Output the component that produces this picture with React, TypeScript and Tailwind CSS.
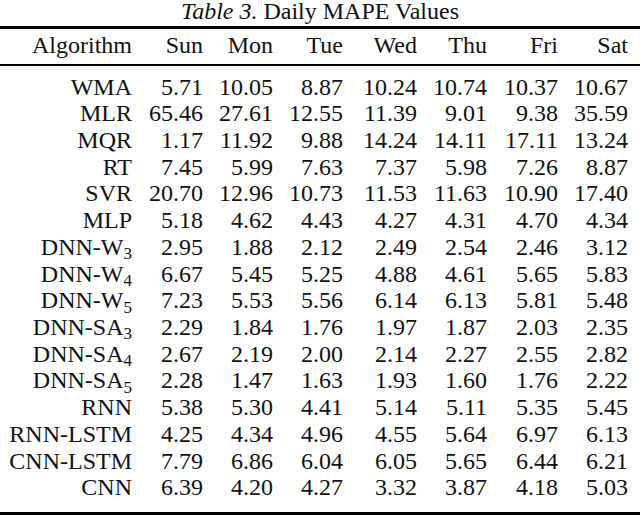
import React from "react";

type Row = { name: string; sub?: string; vals: string[] };

const rows: Row[] = [
  { name: "WMA", vals: ["5.71", "10.05", "8.87", "10.24", "10.74", "10.37", "10.67"] },
  { name: "MLR", vals: ["65.46", "27.61", "12.55", "11.39", "9.01", "9.38", "35.59"] },
  { name: "MQR", vals: ["1.17", "11.92", "9.88", "14.24", "14.11", "17.11", "13.24"] },
  { name: "RT", vals: ["7.45", "5.99", "7.63", "7.37", "5.98", "7.26", "8.87"] },
  { name: "SVR", vals: ["20.70", "12.96", "10.73", "11.53", "11.63", "10.90", "17.40"] },
  { name: "MLP", vals: ["5.18", "4.62", "4.43", "4.27", "4.31", "4.70", "4.34"] },
  { name: "DNN-W", sub: "3", vals: ["2.95", "1.88", "2.12", "2.49", "2.54", "2.46", "3.12"] },
  { name: "DNN-W", sub: "4", vals: ["6.67", "5.45", "5.25", "4.88", "4.61", "5.65", "5.83"] },
  { name: "DNN-W", sub: "5", vals: ["7.23", "5.53", "5.56", "6.14", "6.13", "5.81", "5.48"] },
  { name: "DNN-SA", sub: "3", vals: ["2.29", "1.84", "1.76", "1.97", "1.87", "2.03", "2.35"] },
  { name: "DNN-SA", sub: "4", vals: ["2.67", "2.19", "2.00", "2.14", "2.27", "2.55", "2.82"] },
  { name: "DNN-SA", sub: "5", vals: ["2.28", "1.47", "1.63", "1.93", "1.60", "1.76", "2.22"] },
  { name: "RNN", vals: ["5.38", "5.30", "4.41", "5.14", "5.11", "5.35", "5.45"] },
  { name: "RNN-LSTM", vals: ["4.25", "4.34", "4.96", "4.55", "5.64", "6.97", "6.13"] },
  { name: "CNN-LSTM", vals: ["7.79", "6.86", "6.04", "6.05", "5.65", "6.44", "6.21"] },
  { name: "CNN", vals: ["6.39", "4.20", "4.27", "3.32", "3.87", "4.18", "5.03"] },
];

const days = ["Sun", "Mon", "Tue", "Wed", "Thu", "Fri", "Sat"];

const grid = "grid grid-cols-[132px_71px_70px_70px_74px_70px_71px_70px] text-right [font-family:Liberation_Serif,serif]";

export default function App() {
  return (
    <div className="w-[640px] h-[515px] bg-white text-[#111] text-[24px] overflow-hidden [font-family:Liberation_Serif,serif]">
      <div className="pt-[1px] h-[20px] leading-[20px] text-center whitespace-nowrap [font-family:Liberation_Serif,serif]">
        <i className="[font-family:Liberation_Serif,serif]">Table 3.</i> Daily MAPE Values
      </div>
      <div className="mt-[6px] h-[3px] bg-black" />
      <div className={`${grid} pt-[4px] pb-[7px] leading-[24px]`}>
        <div className="[font-family:Liberation_Serif,serif]">Algorithm</div>
        {days.map((d) => (
          <div key={d} className="[font-family:Liberation_Serif,serif]">
            {d}
          </div>
        ))}
      </div>
      <div className="h-[2px] bg-black" />
      <div className="pt-[7.5px] [font-family:Liberation_Serif,serif]">
        {rows.map((r, i) => (
          <div key={i} className={`${grid} h-[26.73px] leading-[26.73px] whitespace-nowrap`}>
            <div className="[font-family:Liberation_Serif,serif]">
              {r.name}
              {r.sub && <sub className="text-[17px] [font-family:Liberation_Serif,serif]">{r.sub}</sub>}
            </div>
            {r.vals.map((v, j) => (
              <div key={j} className="[font-family:Liberation_Serif,serif]">
                {v}
              </div>
            ))}
          </div>
        ))}
      </div>
      <div className="mt-[10.8px] h-[3px] bg-black" />
    </div>
  );
}
